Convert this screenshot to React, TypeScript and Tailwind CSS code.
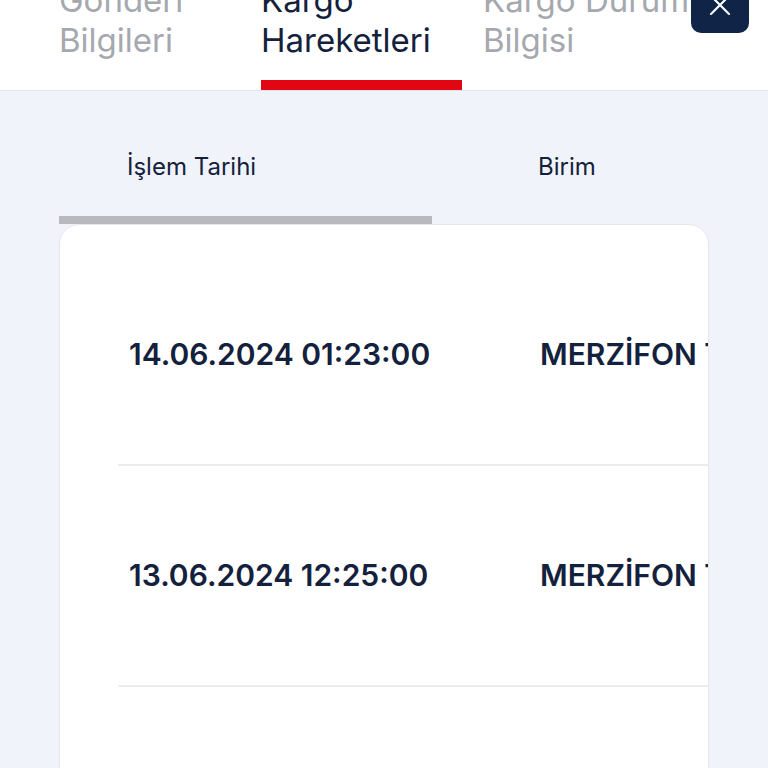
import { X } from "lucide-react";

const tabs = [
  { first: "Gönderi", second: "Bilgileri", active: false },
  { first: "Kargo", second: "Hareketleri", active: true },
  { first: "Kargo Durum", second: "Bilgisi", active: false },
];

const rows = [
  { date: "14.06.2024 01:23:00", unit: "MERZİFON TRANSFER MERKEZİ" },
  { date: "13.06.2024 12:25:00", unit: "MERZİFON TRANSFER MERKEZİ" },
  { date: "13.06.2024 09:10:00", unit: "MERZİFON ŞUBE" },
];

const App = () => {
  return (
    <div
      className="h-[768px] w-[768px] overflow-hidden bg-[#f0f4fa]"
      style={{ fontFamily: "Inter, 'Noto Sans', sans-serif" }}
    >
      <div className="relative h-[91px] overflow-hidden border-b border-[#e3e5ea] bg-white">
        <div className="absolute bottom-0 left-0 flex items-end">
          <div className="ml-[59px] flex w-[202px] flex-col">
            <div className="pb-[20px] text-[33px] leading-[40px] text-[#a5a8ae]">
              <div className="whitespace-nowrap">{tabs[0].first}</div>
              <div className="whitespace-nowrap">{tabs[0].second}</div>
            </div>
            <div className="h-[10px]" />
          </div>
          <div className="flex w-[201px] flex-col">
            <div className="pb-[20px] text-[33px] leading-[40px] text-[#14213d]">
              <div className="whitespace-nowrap">{tabs[1].first}</div>
              <div className="whitespace-nowrap">{tabs[1].second}</div>
            </div>
            <div className="h-[10px] bg-[#e20613]" />
          </div>
          <div className="ml-[21px] flex flex-col">
            <div className="pb-[20px] text-[33px] leading-[40px] text-[#a5a8ae]">
              <div className="whitespace-nowrap">{tabs[2].first}</div>
              <div className="whitespace-nowrap">{tabs[2].second}</div>
            </div>
            <div className="h-[10px]" />
          </div>
        </div>
        <button className="absolute right-[19px] top-[-25px] flex h-[58px] w-[58px] items-center justify-center rounded-[10px] bg-[#0f2447] pt-[2px]">
          <X className="h-[36px] w-[36px] text-white" strokeWidth={1.4} />
        </button>
      </div>

      <div className="flex h-[125px] items-start pt-[61px] text-[24px] leading-[30px] text-[#14213d]">
        <div className="ml-[127px] w-[411px]">İşlem Tarihi</div>
        <div>Birim</div>
      </div>
      <div className="ml-[59px] h-[8px] w-[373px] bg-[#b7b9be]" />

      <div className="ml-[59px] w-[650px] overflow-hidden rounded-t-[20px] border border-[#e4e6ea] bg-white pt-[20px]">
        {rows.map((row) => (
          <div
            key={row.date}
            className="ml-[58px] flex h-[221px] items-center border-b-2 border-[#ebecee] pl-[11px]"
          >
            <div className="w-[411px] shrink-0 whitespace-nowrap text-[30px] font-semibold text-[#14213d]">
              {row.date}
            </div>
            <div className="whitespace-nowrap text-[30px] font-semibold text-[#14213d]">
              {row.unit}
            </div>
          </div>
        ))}
      </div>
    </div>
  );
};

export default App;
